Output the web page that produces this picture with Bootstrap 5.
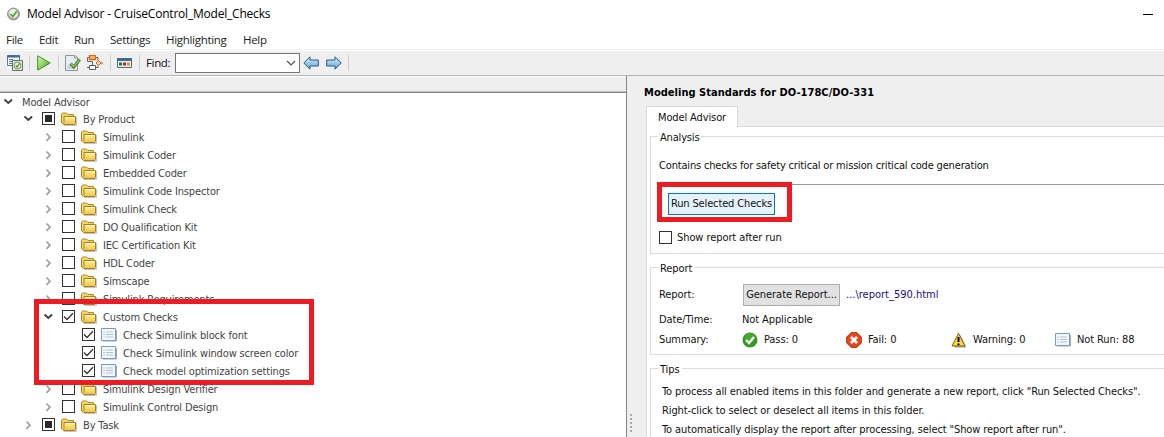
<!DOCTYPE html>
<html lang="en">
<head>
<meta charset="utf-8">
<meta name="viewport" content="width=device-width, initial-scale=1">
<title>Model Advisor - CruiseControl_Model_Checks</title>
<link rel="stylesheet" href="https://cdn.jsdelivr.net/npm/bootstrap@5.3.0/dist/css/bootstrap.min.css">
<style>
  body { font-family: "DejaVu Sans Condensed", "DejaVu Sans", sans-serif; font-stretch: condensed; font-size: 11px; line-height: 18px; color: #111; height: 437px; overflow: hidden; background: #fff; white-space: nowrap; }
  svg { display: block; flex: none; }
  .segoe { font-family: "Open Sans", "Noto Sans", sans-serif; font-stretch: normal; }
  .titlebar { height: 28px; padding-left: 7px; font-size: 12px; color: #000; }
  .titlebar .caption { margin-left: 7px; width: 250px; letter-spacing: -.21px; }
  .minimize { width: 10px; height: 1px; background: #000; margin: 0 11px 0 auto; }
  .menus { height: 21px; padding: 2px 0 0 6px; font-size: 11.5px; letter-spacing: -.3px; color: #222; }
  .menus span:nth-child(1) { width: 33px; } .menus span:nth-child(2) { width: 35px; } .menus span:nth-child(3) { width: 36px; }
  .menus span:nth-child(4) { width: 56px; } .menus span:nth-child(5) { width: 77px; }
  .tools { height: 27px; border-top: 1px solid #f0f0f0; border-bottom: 1px solid #b4b4b4; background: #efefef; box-shadow: inset 0 1px #fff; padding-left: 7px; }
  .sep { width: 1px; height: 16px; background: #cfcfcf; margin: 0 6px; }
  .sep-wide { margin-left: 7px; }
  .findlabel { width: 29px; font-size: 11.5px; letter-spacing: -.35px; padding-top: 1px; }
  .find { width: 125px; height: 20px; border: 1px solid #777; background: #fff; padding-right: 3px; margin-right: 3px; }
  .main { height: 361px; }
  .left { width: 627px; border-right: 1px solid #828790; }
  .strip { height: 17px; background: #efefef; border-top: 1px solid #fff; border-bottom: 1px solid #828790; box-shadow: inset 0 -1px #c0c0c0; }
  .tree { color: #444; height: 344px; letter-spacing: -.15px; }
  .tree .item { height: 18px; padding-top: 2px; }
  .tree .root { height: 17px; padding-top: 3px; }
  .l1 { padding-left: 20px; } .l2 { padding-left: 40px; } .l3 { padding-left: 82px; }
  .tw { width: 16px; height: 16px; margin: 0 6px 2px 0; }
  .box { width: 13px; height: 13px; border: 1px solid #333; background: #fff; flex: none; }
  .tree .box { margin: 0 6px 3px 0; }
  .tree .ico { margin: 0 6px 2px 0; }
  .part::after { content: ""; display: block; width: 7px; height: 7px; margin: 2px; background: #2b2b2b; }
  .mark-frame { position: absolute; border: 5px solid #ed1c24; z-index: 3; }
  .f1 { left: 34px; top: 299px; width: 280px; height: 86px; }
  .f2 { left: 657px; top: 182px; width: 135px; height: 40px; }
  .split { width: 19px; background: #efefef; padding: 338px 0 0 3px; }
  .split i { display: block; width: 2px; height: 2px; margin-bottom: 2px; background: #aaa; }
  .right { background: #efefef; min-width: 0; letter-spacing: -.17px; }
  .head { height: 30px; line-height: 33px; margin-left: -2px; font-weight: bold; color: #000; letter-spacing: .03px; }
  .tabs { height: 21px; }
  .tabx { width: 92px; border: 1px solid #d9d9d9; border-bottom: 0; background: #fff; line-height: 21px; text-align: center; letter-spacing: -.12px; }
  .tabline { border-bottom: 1px solid #d9d9d9; }
  .pane { background: #fff; border-left: 1px solid #d9d9d9; height: 310px; padding: 9px 0 0 3px; }
  .group { position: relative; border: 1px solid #dcdcdc; border-right: 0; padding-left: 8px; }
  .cap { position: absolute; left: 7px; top: -8px; line-height: 17px; background: #fff; padding: 0 2px; }
  .analysis { height: 118px; margin-bottom: 13px; }
  .intro { padding-top: 20px; }
  .rule { height: 1px; margin-top: 9px; background: #999; }
  .report { height: 88px; margin-bottom: 13px; letter-spacing: -.1px; }
  .tips { height: 90px; padding: 13px 0 0 11px; line-height: 19px; letter-spacing: -.1px; }
  .runbtn, .genbtn { height: 22px; font: inherit; line-height: 20px; padding: 0; border-radius: 0; color: #111; text-align: center; }
  .runbtn { width: 107px; border: 1px solid #0078d7; background: #e5f1fb; margin: 8px 0 0 9px; letter-spacing: -.14px; }
  .genbtn { width: 97px; border: 1px solid #adadad; background: #e1e1e1; letter-spacing: -.05px; margin-left: 1px; }
  .showrow { margin-top: 14px; gap: 5px; letter-spacing: -.08px; }
  .showrow .box { margin-bottom: 1px; }
  .row-rep { padding-top: 16px; }
  .row-date { margin-top: 5px; }
  .row-sum { margin-top: 2px; }
  .key { width: 83px; }
  .cnt { width: 104px; gap: 6px; }
  .link { color: #1a0d8e; margin-left: 6px; letter-spacing: 0; }
</style>
</head>
<body>
<svg width="0" height="0" class="position-absolute" aria-hidden="true">
  <defs>
    <linearGradient id="gold" x2="0" y2="1"><stop stop-color="#fff6b0"/><stop offset="1" stop-color="#f0c445"/></linearGradient>
    <linearGradient id="leaf" x2="1" y2="1"><stop stop-color="#dcffad"/><stop offset="1" stop-color="#3fa51c"/></linearGradient>
    <linearGradient id="sky" x2="0" y2="1"><stop stop-color="#d9f0fc"/><stop offset="1" stop-color="#5da2d3"/></linearGradient>
    <radialGradient id="silver" cx=".4" cy=".3"><stop stop-color="#fff"/><stop offset="1" stop-color="#aaa"/></radialGradient>
    <symbol id="folder" viewBox="0 0 16 16"><path d="M3 14.500h12.500V6" fill="none" stroke="#b9c5dc"/><path d="M.5 12V3.500l1-1.500h4l1.500 1.500h5.500V6" fill="#f5d467" stroke="#b98a1b"/><path d="M.5 4v7.500l2 2h11.500l.5-1V5.500H3v6.500" fill="url(#gold)" stroke="#b57e0c"/><path d="M4 6.500h9.500" stroke="#fffbe0"/></symbol>
    <symbol id="list" viewBox="0 0 16 14"><path d="M2 13h13.500V2" fill="none" stroke="#9aa8c8"/><path d="M.5.5h14v12H.5z" fill="#f4f8ff" stroke="#7898d2"/><path d="M2.500 4h1m-1 2.500h1m-1 2.500h1" stroke="#8098bd"/><path d="M5 4h7M5 6.500h7M5 9h7" stroke="#b3bfd0"/></symbol>
    <symbol id="closed" viewBox="0 0 16 16"><path d="M6.500 4.500 10 8.200l-3.500 3.700" fill="none" stroke="#a0a0a0" stroke-width="1.700"/></symbol>
    <symbol id="open" viewBox="0 0 16 16"><path d="M4.500 5.500 8.300 9l3.800-3.500" fill="none" stroke="#404040" stroke-width="1.900"/></symbol>
    <symbol id="tick" viewBox="0 0 11 11"><path d="M1 5.500 4 8.500 10 2.300" fill="none" stroke="#333" stroke-width="1.300"/></symbol>
  </defs>
</svg>

<header class="segoe">
  <div class="titlebar d-flex align-items-center">
    <svg width="13" height="14" viewBox="0 0 13 14"><circle cx="6.500" cy="7" r="5.900" fill="url(#silver)" stroke="#858585"/><circle cx="6.500" cy="6.800" r="4.300" fill="#e9f3dd"/><path d="M3.500 7 5.800 9.500l4-5.300" fill="none" stroke="#5f9f3c" stroke-width="1.800"/></svg>
    <span class="caption">Model Advisor - CruiseControl_Model_Checks</span>
    <span class="minimize"></span>
  </div>
  <nav class="menus d-flex align-items-center"><span>File</span><span>Edit</span><span>Run</span><span>Settings</span><span>Highlighting</span><span>Help</span></nav>
</header>

<div class="tools segoe d-flex align-items-center">
  <svg width="16" height="16" viewBox="0 0 16 16"><path d="M.5.500h12v10H.5z" fill="#f3f6f8" stroke="#667786"/><path d="M0 1.500h13" stroke="#386ca0" stroke-width="2"/><path d="M2 4.500h4m-4 2h3m-3 2h3" stroke="#657b8d"/><path d="M5.500 5.500h10v10h-10z" fill="#e6e6e6" stroke="#61717c"/><circle cx="10.500" cy="10.500" r="3.500" fill="#edf7de" stroke="#709343"/><path d="m8.800 10.500 1.400 1.500 2.300-3.500" fill="none" stroke="#4c861f" stroke-width="1.200"/></svg>
  <span class="sep me-0"></span>
  <svg width="14" height="16" viewBox="0 0 14 16" style="margin:0 7px"><path d="M.7.8 13.200 8 .7 15.200z" fill="url(#leaf)" stroke="#399126"/></svg>
  <span class="sep ms-0"></span>
  <svg width="16" height="16" viewBox="0 0 16 16"><path d="M.5.500h9l3 2v13H.5z" fill="#e8ecf3" stroke="#8b919c"/><path d="M9.500.5V3h3" fill="#ccd" stroke="#9299a5"/><path d="M2.500 13h7m-7-2h4" stroke="#aeb6c2"/><path d="m5.500 8.500 3.200 3.500L14.800 4.500" fill="none" stroke="#43772a" stroke-width="3"/><path d="m5.700 8.500 3 3L14.500 5" fill="none" stroke="#8fc368" stroke-width="1.300"/></svg>
  <svg width="17" height="16" viewBox="0 0 17 16" style="margin-left:6px"><path d="M3 2.500H.5v4h5v4M8.500 2.500H11v3m0 5v2H8.500M0 12.500h3M13.500 8H16" fill="none" stroke="#62666c"/><path d="M2.500.5h6v4h-6z" fill="#ffbd75" stroke="#db6516" stroke-width="1.300"/><path d="M2.500 10.500h6v4h-6z" fill="#fff" stroke="#555b62"/><path d="M11.500 5.500 14 8l-2.500 2.500L9 8z" fill="#ffd3a0" stroke="#db6516"/></svg>
  <span class="sep"></span>
  <svg width="15" height="10" viewBox="0 0 15 10"><path d="M.5.5h14v9H.5z" fill="#e8edf2" stroke="#536b86"/><path d="M0 1.500h15" stroke="#426993" stroke-width="3"/><path d="M2 4.500h3v3H2z" fill="#168226"/><path d="M6 4.500h3v3H6z" fill="#d71922"/><path d="M10 4.500h3v3h-3z" fill="#e69a00"/></svg>
  <span class="sep sep-wide"></span>
  <span class="findlabel">Find:</span>
  <div class="find d-flex align-items-center justify-content-end"><svg width="10" height="6" viewBox="0 0 10 6"><path d="m1 1 4 4 4-4" fill="none" stroke="#555" stroke-width="1.200"/></svg></div>
  <svg width="16" height="14" viewBox="0 0 16 14"><path d="M.8 7 7 .8v3.200h8.300v6H7v3.200z" fill="url(#sky)" stroke="#285a86"/></svg>
  <svg width="16" height="14" viewBox="0 0 16 14" style="margin-left:7px"><path d="M15.200 7 9 .8V4H.7v6H9v3.200z" fill="url(#sky)" stroke="#285a86"/></svg>
  <span class="sep"></span>
</div>

<main class="main d-flex">
  <section class="left flex-shrink-0">
    <div class="strip"></div>
    <div class="tree">
      <div class="item root d-flex align-items-center"><svg class="tw"><use href="#open"/></svg>Model Advisor</div>
      <div class="item l1 d-flex align-items-center"><svg class="tw"><use href="#open"/></svg><span class="box part"></span><svg class="ico" width="16" height="16"><use href="#folder"/></svg>By Product</div>
      <div class="item l2 d-flex align-items-center"><svg class="tw"><use href="#closed"/></svg><span class="box"></span><svg class="ico" width="16" height="16"><use href="#folder"/></svg>Simulink</div>
      <div class="item l2 d-flex align-items-center"><svg class="tw"><use href="#closed"/></svg><span class="box"></span><svg class="ico" width="16" height="16"><use href="#folder"/></svg>Simulink Coder</div>
      <div class="item l2 d-flex align-items-center"><svg class="tw"><use href="#closed"/></svg><span class="box"></span><svg class="ico" width="16" height="16"><use href="#folder"/></svg>Embedded Coder</div>
      <div class="item l2 d-flex align-items-center"><svg class="tw"><use href="#closed"/></svg><span class="box"></span><svg class="ico" width="16" height="16"><use href="#folder"/></svg>Simulink Code Inspector</div>
      <div class="item l2 d-flex align-items-center"><svg class="tw"><use href="#closed"/></svg><span class="box"></span><svg class="ico" width="16" height="16"><use href="#folder"/></svg>Simulink Check</div>
      <div class="item l2 d-flex align-items-center"><svg class="tw"><use href="#closed"/></svg><span class="box"></span><svg class="ico" width="16" height="16"><use href="#folder"/></svg>DO Qualification Kit</div>
      <div class="item l2 d-flex align-items-center"><svg class="tw"><use href="#closed"/></svg><span class="box"></span><svg class="ico" width="16" height="16"><use href="#folder"/></svg>IEC Certification Kit</div>
      <div class="item l2 d-flex align-items-center"><svg class="tw"><use href="#closed"/></svg><span class="box"></span><svg class="ico" width="16" height="16"><use href="#folder"/></svg>HDL Coder</div>
      <div class="item l2 d-flex align-items-center"><svg class="tw"><use href="#closed"/></svg><span class="box"></span><svg class="ico" width="16" height="16"><use href="#folder"/></svg>Simscape</div>
      <div class="item l2 d-flex align-items-center"><svg class="tw"><use href="#closed"/></svg><span class="box"></span><svg class="ico" width="16" height="16"><use href="#folder"/></svg>Simulink Requirements</div>
      <div class="item l2 d-flex align-items-center"><svg class="tw"><use href="#open"/></svg><span class="box"><svg width="11" height="11"><use href="#tick"/></svg></span><svg class="ico" width="16" height="16"><use href="#folder"/></svg>Custom Checks</div>
      <div class="item l3 d-flex align-items-center"><span class="box"><svg width="11" height="11"><use href="#tick"/></svg></span><svg class="ico" width="16" height="14"><use href="#list"/></svg>Check Simulink block font</div>
      <div class="item l3 d-flex align-items-center"><span class="box"><svg width="11" height="11"><use href="#tick"/></svg></span><svg class="ico" width="16" height="14"><use href="#list"/></svg>Check Simulink window screen color</div>
      <div class="item l3 d-flex align-items-center"><span class="box"><svg width="11" height="11"><use href="#tick"/></svg></span><svg class="ico" width="16" height="14"><use href="#list"/></svg>Check model optimization settings</div>
      <div class="item l2 d-flex align-items-center"><svg class="tw"><use href="#closed"/></svg><span class="box"></span><svg class="ico" width="16" height="16"><use href="#folder"/></svg>Simulink Design Verifier</div>
      <div class="item l2 d-flex align-items-center"><svg class="tw"><use href="#closed"/></svg><span class="box"></span><svg class="ico" width="16" height="16"><use href="#folder"/></svg>Simulink Control Design</div>
      <div class="item l1 d-flex align-items-center"><svg class="tw"><use href="#closed"/></svg><span class="box part"></span><svg class="ico" width="16" height="16"><use href="#folder"/></svg>By Task</div>
    </div>
  </section>
  <div class="split flex-shrink-0"><i></i><i></i><i></i><i></i><i></i></div>
  <section class="right flex-grow-1">
    <div class="head">Modeling Standards for DO-178C/DO-331</div>
    <div class="tabs d-flex"><div class="tabx">Model Advisor</div><div class="tabline flex-grow-1"></div></div>
    <div class="pane">
      <div class="group analysis">
        <span class="cap">Analysis</span>
        <div class="intro">Contains checks for safety critical or mission critical code generation</div>
        <div class="rule"></div>
        <button class="btn runbtn d-block">Run Selected Checks</button>
        <div class="showrow d-flex align-items-center"><span class="box"></span>Show report after run</div>
      </div>
      <div class="group report">
        <span class="cap">Report</span>
        <div class="row-rep d-flex align-items-center"><span class="key">Report:</span><button class="btn genbtn">Generate Report...</button><span class="link">...\report_590.html</span></div>
        <div class="row-date d-flex"><span class="key">Date/Time:</span>Not Applicable</div>
        <div class="row-sum d-flex align-items-center"><span class="key">Summary:</span>
          <span class="cnt d-flex align-items-center"><svg width="16" height="16" viewBox="0 0 16 16"><circle cx="8" cy="8" r="7.500" fill="#329b20"/><circle cx="8" cy="6" r="5" fill="#64b84f" opacity=".4"/><path d="m4 8 3 3 5-6" fill="none" stroke="#fff" stroke-width="2.300"/></svg>Pass: 0</span>
          <span class="cnt d-flex align-items-center"><svg width="16" height="16" viewBox="0 0 16 16"><path d="M5 .7h6L15.300 5v6L11 15.300H5L.7 11V5z" fill="#e4481a" stroke="#b92b0b"/><path d="m5 5 6 6m0-6-6 6" stroke="#fff" stroke-width="2.600"/></svg>Fail: 0</span>
          <span class="cnt d-flex align-items-center" style="margin-left:1px"><svg width="16" height="16" viewBox="0 0 16 16"><path d="M3 15.500h12.500L9.500 3" fill="#aaa"/><path d="M7.500 1.300 14 14H1z" fill="#ffd83c" stroke="#756018"/><path d="M7.500 5v5m0 1.500v1.700" stroke="#000" stroke-width="2"/></svg>Warning: 0</span>
          <span class="cnt d-flex align-items-center"><svg width="16" height="14"><use href="#list"/></svg>Not Run: 88</span>
        </div>
      </div>
      <div class="group tips">
        <span class="cap">Tips</span>
        <div>To process all enabled items in this folder and generate a new report, click "Run Selected Checks".</div>
        <div>Right-click to select or deselect all items in this folder.</div>
        <div>To automatically display the report after processing, select "Show report after run".</div>
      </div>
    </div>
  </section>
</main>
<div class="mark-frame f1"></div>
<div class="mark-frame f2"></div>
<script src="https://cdn.jsdelivr.net/npm/bootstrap@5.3.0/dist/js/bootstrap.bundle.min.js"></script>
</body>
</html>
